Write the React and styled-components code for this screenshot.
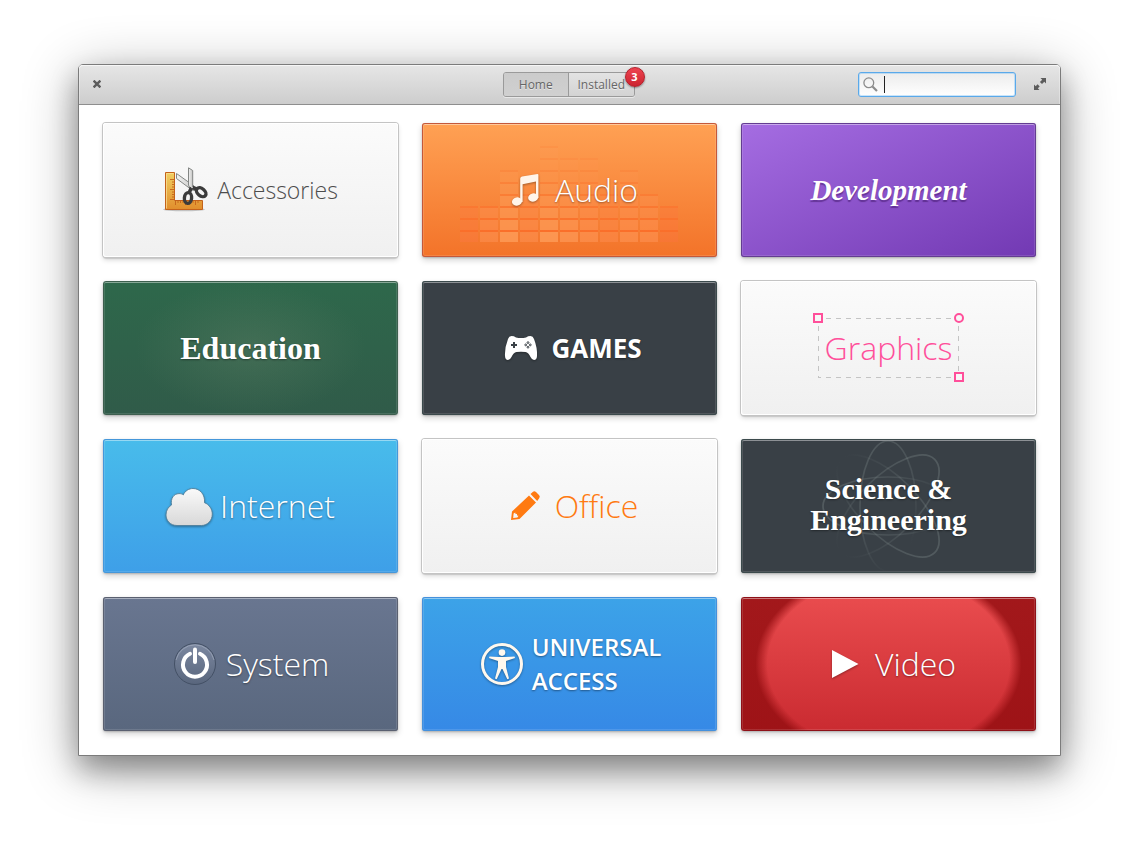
import React from "react";
import styled, { createGlobalStyle, css } from "styled-components";

const GlobalStyle = createGlobalStyle`
  * { box-sizing: border-box; }
  body {
    margin: 0;
    background: #fff;
    font-family: "Open Sans", "Noto Sans", sans-serif;
  }
  button, input { font: inherit; }
`;

const Desktop = styled.div`
  min-height: 100vh;
  padding: 64px 78px 92px;
  overflow: hidden;
`;

const Window = styled.main`
  background: #fff;
  border: 1px solid #7b7b7b;
  border-radius: 5px 5px 0 0;
  box-shadow: 0 14px 28px rgba(0, 0, 0, 0.32), 0 10px 56px rgba(0, 0, 0, 0.32);
`;

const HeaderBar = styled.header`
  display: grid;
  grid-template-columns: 1fr auto 1fr;
  align-items: center;
  height: 40px;
  padding: 0 12px 0 10px;
  border-bottom: 1px solid #8e8e8e;
  border-radius: 4px 4px 0 0;
  background: linear-gradient(#e6e6e6, #cdcdcd);
  box-shadow: inset 0 1px 0 #f6f6f6, inset 1px 0 0 rgba(255, 255, 255, 0.3), inset -1px 0 0 rgba(255, 255, 255, 0.3);
`;

const IconButton = styled.button`
  display: grid;
  place-items: center;
  width: 16px;
  height: 24px;
  padding: 0 0 2px;
  border: 0;
  background: none;
  color: #5c5c5c;
`;

const HeaderEnd = styled.div`
  display: flex;
  align-items: center;
  justify-content: flex-end;
  gap: 16px;
`;

const Switcher = styled.nav`
  position: relative;
  display: flex;
  width: 132px;
  height: 25px;
  border: 1px solid #9a9a9a;
  border-radius: 3px;
  box-shadow: 0 1px 0 rgba(255, 255, 255, 0.5);
`;

const SwitchButton = styled.button`
  flex: 1;
  padding: 0;
  border: 0;
  font-size: 12px;
  line-height: 22px;
  color: #666;
  text-shadow: 0 1px 0 rgba(255, 255, 255, 0.5);
  border-radius: 2px;
  background: linear-gradient(#e3e3e3, #d3d3d3);
  ${(p) =>
    p.$active &&
    css`
      background: linear-gradient(#cbcbcb, #d0d0d0);
      border-right: 1px solid #9a9a9a;
      border-radius: 2px 0 0 2px;
    `}
`;

const Badge = styled.span`
  position: absolute;
  top: -6px;
  right: -11px;
  width: 20px;
  height: 20px;
  border: 1px solid #b3202b;
  border-radius: 50%;
  background: linear-gradient(#ee4350, #cc2430);
  box-shadow: 0 1px 2px rgba(0, 0, 0, 0.4);
  color: #fff;
  font-size: 11px;
  font-weight: 700;
  line-height: 18px;
  text-align: center;
`;

const SearchBox = styled.label`
  display: flex;
  align-items: center;
  width: 158px;
  height: 25px;
  padding-left: 4px;
  border: 1px solid #5aa9ea;
  border-radius: 3px;
  background: linear-gradient(#ececec, #fff);
  box-shadow: inset 0 0 0 1px rgba(120, 190, 245, 0.4);
`;

const Caret = styled.span`
  width: 1px;
  height: 17px;
  margin-left: 6px;
  background: #222;
`;

const SearchInput = styled.input`
  flex: 1;
  min-width: 0;
  padding: 0;
  border: 0;
  outline: 0;
  background: none;
  font-size: 12px;
`;

const Categories = styled.div`
  display: grid;
  grid-template-columns: repeat(3, 1fr);
  grid-auto-rows: 134px;
  gap: 24px;
  padding: 18px 24px 24px;
`;

const looks = {
  light: css`
    background: linear-gradient(#fbfbfb, #f0f0f0);
    box-shadow: 0 0 0 1px #c4c4c4, 0 2px 1px rgba(0, 0, 0, 0.12), 0 3px 5px rgba(0, 0, 0, 0.16), inset 0 0 0 1px #fff;
  `,
  audio: css`
    --edge: #c4583a;
    background: linear-gradient(#ffa154, #f37329);
  `,
  development: css`
    --edge: #633c91;
    background: linear-gradient(to bottom right, #a56de2, #7239b3);
  `,
  education: css`
    --edge: #3d5f4e;
    background: radial-gradient(ellipse 115px 67px at center, rgba(99, 129, 103, 0.38), rgba(99, 129, 103, 0)),
      linear-gradient(#2e684b, #305b49);
  `,
  dark: css`
    --edge: #3b4a4c;
    background: #394046;
  `,
  internet: css`
    --edge: #4597da;
    background: linear-gradient(#48bceb, #3e9fe8);
  `,
  system: css`
    --edge: #5a6070;
    background: linear-gradient(#697690, #59677e);
  `,
  access: css`
    --edge: #4490dc;
    background: linear-gradient(#3ca3e8, #3689e6);
  `,
  video: css`
    --edge: #8e1118;
    background: radial-gradient(
        ellipse 133px 96px at center,
        rgba(150, 15, 18, 0) 91%,
        rgba(150, 15, 18, 0.85) 100%
      ),
      linear-gradient(#e94c4e, #ca2b31);
  `,
};

const Card = styled.button`
  position: relative;
  display: flex;
  align-items: center;
  justify-content: center;
  gap: 6px;
  padding: 0;
  border: 0;
  border-radius: 3px;
  color: #fff;
  box-shadow: inset 0 0 0 1px var(--edge), inset 0 2px 0 rgba(255, 255, 255, 0.35),
    inset 0 0 0 2px rgba(255, 255, 255, 0.12), 0 1px 2px rgba(0, 0, 0, 0.2), 0 3px 6px rgba(0, 0, 0, 0.18);
  ${(p) => looks[p.$look]}
`;

const Title = styled.span`
  position: relative;
  font-size: 32px;
  font-weight: 300;
  line-height: 44px;
  color: ${(p) => p.$color || "#fff"};
  text-align: left;
  ${(p) => !p.$color && "text-shadow: 0 1px 2px rgba(0, 0, 0, 0.4);"}
`;

const SmallTitle = styled(Title)`
  font-size: 23px;
  line-height: 34px;
`;

const CapsTitle = styled(SmallTitle)`
  font-size: 24px;
  font-weight: 600;
  text-transform: uppercase;
`;

const GamesTitle = styled(CapsTitle)`
  font-size: 26px;
  font-weight: 700;
`;

const SerifTitle = styled(Title)`
  font-family: "Liberation Serif", serif;
  font-weight: 700;
  text-align: center;
`;

const ScriptTitle = styled(SerifTitle)`
  font-size: 29px;
  font-style: italic;
  text-shadow: 0 2px 1px rgba(60, 20, 100, 0.5);
`;

const TwoLineTitle = styled(SerifTitle)`
  padding-bottom: 4px;
  font-size: 30px;
  line-height: 31px;
`;

const Backdrop = styled.svg`
  position: absolute;
  inset: 0;
  width: 100%;
  height: 100%;
`;

const Glyph = styled.svg`
  position: relative;
  flex: none;
  width: 48px;
  height: 48px;
  overflow: visible;
  ${(p) => p.$shadow && "filter: drop-shadow(0 1px 1px rgba(0, 0, 0, 0.35));"}
`;

const Selection = styled.span`
  position: relative;
  display: grid;
  place-items: center;
  width: 141px;
  height: 60px;
`;

const SelectionMarks = styled.svg`
  position: absolute;
  inset: 0;
  width: 100%;
  height: 100%;
  overflow: visible;
`;

const columns = [
  [3, 0.15],
  [3, 0.5],
  [6, 0.9],
  [4, 0.5],
  [8, 0.9],
  [7, 0.75],
  [7, 0.6],
  [4, 0.4],
  [6, 0.6],
  [4, 0.55],
  [3, 0.1],
];

function Equalizer() {
  return (
    <Backdrop viewBox="0 0 295 134" aria-hidden="true">
      {columns.map(([count, strength], c) =>
        Array.from({ length: count }, (_, r) => {
          const fade = Math.max(0.22, 1 - r / 7);
          const x = 38 + c * 20;
          const y = 109 - r * 12;
          return (
            <g key={`${c}-${r}`} opacity={fade}>
              <rect x={x} y={y} width="18" height="10" fill="#ff6a3c" opacity="0.3" />
              <rect x={x} y={y} width="18" height="10" fill="#ffac66" opacity={strength * 0.65} />
              <rect x={x} y={y - 2} width="18" height="2" fill="#ff6224" opacity="0.5" />
            </g>
          );
        })
      )}
    </Backdrop>
  );
}

function Atom() {
  return (
    <Backdrop viewBox="0 0 295 134" fill="none" strokeWidth="1.7" aria-hidden="true">
      <defs>
        <linearGradient id="orbit" x1="0" y1="0" x2="1" y2="0">
          <stop offset="0" stopColor="#828e8e" stopOpacity="0.34" />
          <stop offset="0.6" stopColor="#828e8e" stopOpacity="0.2" />
          <stop offset="1" stopColor="#828e8e" stopOpacity="0" />
        </linearGradient>
        <linearGradient id="orbitTall" x1="0" y1="0" x2="0.5" y2="1">
          <stop offset="0" stopColor="#828e8e" stopOpacity="0.34" />
          <stop offset="0.6" stopColor="#828e8e" stopOpacity="0.2" />
          <stop offset="1" stopColor="#828e8e" stopOpacity="0" />
        </linearGradient>
      </defs>
      <ellipse cx="147" cy="67" rx="28" ry="65" stroke="url(#orbitTall)" />
      <ellipse cx="147" cy="67" rx="65" ry="29" stroke="url(#orbit)" />
      <ellipse cx="147" cy="67" rx="66" ry="29" stroke="url(#orbit)" transform="rotate(225 147 67)" />
      <ellipse cx="147" cy="67" rx="66" ry="29" stroke="url(#orbit)" transform="rotate(135 147 67)" />
    </Backdrop>
  );
}

function ScissorsIcon() {
  return (
    <Glyph viewBox="0 0 48 48" aria-hidden="true">
      <defs>
        <linearGradient id="wood" x1="0" y1="0" x2="0" y2="1">
          <stop offset="0" stopColor="#f0cf62" />
          <stop offset="1" stopColor="#e18e2c" />
        </linearGradient>
        <linearGradient id="steel">
          <stop offset="0" stopColor="#f2f2f2" />
          <stop offset="1" stopColor="#c4c4c2" />
        </linearGradient>
      </defs>
      <ellipse cx="21" cy="43.5" rx="21" ry="1.8" fill="#000" opacity="0.2" />
      <g transform="translate(-1 -1)">
        <path d="M3.5 7.5H12.5V35.5H40.5V44.5H3.5Z" fill="url(#wood)" stroke="#c4621a" />
        <path d="M4.5 43.5V8.5H11.5" fill="none" stroke="#fbe29b" opacity="0.7" />
        <path
          d="M8 14.5H12M10 17H12M10 19.5H12M10 22H12M8 24.5H12M10 27H12M10 29.5H12M10 32H12M8 34.5H12M13.5 36V40M16 36V38M18.5 36V38M21 36V38M23.5 36V40M28.5 36V38M31 36V38M33.5 36V40M36 36V38"
          stroke="#c4621a"
          strokeWidth="0.9"
        />
        <path d="M14.5 8.5L32 21L33.5 25.5L30 25L14.5 13.5Z" fill="url(#steel)" stroke="#838684" />
        <path d="M26.5 2.8L30.7 5.5V22L28 23.5L26.5 20Z" fill="url(#steel)" stroke="#838684" />
        <path d="M30.5 22.5L36 24.5M29.5 22.5L27 28" stroke="#3b3b3b" strokeWidth="3.6" />
        <ellipse cx="26" cy="33" rx="3.6" ry="5.4" transform="rotate(6 26 33)" fill="none" stroke="#3b3b3b" strokeWidth="3.4" />
        <ellipse cx="39.2" cy="27.2" rx="5.4" ry="3.6" transform="rotate(40 39.2 27.2)" fill="none" stroke="#3b3b3b" strokeWidth="3.4" />
        <circle cx="30" cy="22.5" r="0.8" fill="#ddd" />
      </g>
    </Glyph>
  );
}

function MusicIcon() {
  return (
    <Glyph $shadow viewBox="-2 0 48 48" fill="#fff5ea" aria-hidden="true">
      <path d="M17.2 12.5Q17.4 11 19 10.6L34.5 8Q35.4 8 35.4 9V32H33V15.5L19.6 18.3V36H17.2Z" />
      <ellipse cx="14" cy="35.5" rx="5.1" ry="4.1" transform="rotate(-12 14 35.5)" />
      <ellipse cx="30.2" cy="31.5" rx="5.1" ry="4.1" transform="rotate(-12 30.2 31.5)" />
    </Glyph>
  );
}

function GamepadIcon() {
  return (
    <Glyph $shadow viewBox="0 0 48 48" aria-hidden="true">
      <path
        d="M14.5 12Q17 12 19 13.4Q24 14.6 29 13.4Q31 12 33.5 12Q36 12.2 37 15Q40.5 24 40 32Q39.8 36 37 36Q35 36 33.5 33Q31.5 28.3 28.5 28Q24 27.3 19.5 28Q16.5 28.3 14.5 33Q13 36 11 36Q8.2 36 8 32Q7.5 24 11 15Q12 12.2 14.5 12Z"
        fill="#fff"
      />
      <path d="M14 21H20M17 18V24" stroke="#394046" strokeWidth="2" />
      <g fill="none" stroke="#394046" strokeWidth="1">
        <circle cx="31" cy="18.6" r="0.9" />
        <circle cx="31" cy="23.2" r="0.9" />
        <circle cx="28.7" cy="20.9" r="0.9" />
        <circle cx="33.3" cy="20.9" r="0.9" />
      </g>
    </Glyph>
  );
}

function CloudIcon() {
  return (
    <Glyph $shadow viewBox="1 0 48 48" aria-hidden="true">
      <defs>
        <linearGradient id="cloud" x1="0" y1="0" x2="0" y2="1">
          <stop offset="0" stopColor="#fafafa" />
          <stop offset="1" stopColor="#d8d8d8" />
        </linearGradient>
      </defs>
      <path
        d="M12 43.5C5.5 43.5 1 38.7 1 33C1 28.5 3.2 25 6.5 23C5.5 16.5 8.5 11.8 14 11.6C15.8 11.5 17.2 12 18.3 12.9C20 8.8 24 6.5 28 6.5C35 6.5 40.3 12.7 39.5 20.7C44 22.3 47.3 27 47.3 32C47.3 38.5 42.5 43.5 36.5 43.5Z"
        fill="url(#cloud)"
        stroke="#4f7f9b"
        strokeWidth="0.9"
      />
    </Glyph>
  );
}

function PencilIcon() {
  return (
    <Glyph viewBox="-1 0 48 48" fill="#ff7a11" aria-hidden="true">
      <path d="M9 38L10 29.5L27 13.5L34 20.5L17.5 37ZM11.6 31.5L11.2 36L15.4 35.4L16.5 33.8L15 33.6V32L13.3 31.8V30.5Z" fillRule="evenodd" />
      <path d="M28.5 12L31 9.7Q32.5 8.6 34 10L37 13Q38.5 14.6 37.2 16.2L35.2 19Z" />
    </Glyph>
  );
}

function PowerIcon() {
  return (
    <Glyph viewBox="-1 0 48 48" fill="none" aria-hidden="true">
      <defs>
        <linearGradient id="knob" x1="0" y1="0" x2="0" y2="1">
          <stop offset="0" stopColor="#7c88a0" />
          <stop offset="1" stopColor="#59667d" />
        </linearGradient>
      </defs>
      <circle cx="22" cy="24" r="20.5" fill="url(#knob)" stroke="#435065" />
      <path d="M3 20A19.5 19.5 0 0 1 41 20" stroke="#a3adbf" opacity="0.7" />
      <g stroke="#fff" strokeLinecap="round">
        <path d="M17 13.8A12 12 0 1 0 27 13.8" strokeWidth="4" />
        <path d="M22 9.5V22" strokeWidth="4" />
      </g>
    </Glyph>
  );
}

function AccessIcon() {
  return (
    <Glyph $shadow viewBox="0 0 48 48" aria-hidden="true">
      <circle cx="24" cy="24" r="19.5" fill="none" stroke="#fff8ee" strokeWidth="3" />
      <circle cx="24" cy="12.6" r="3.3" fill="#fff8ee" />
      <path
        d="M11.5 16.5L20.5 17H27.5L36.5 16.5L37 18L28 21V27L31 38.5L29.3 39.2L24.5 29H23.5L18.7 39.2L17 38.5L20 27V21L11 18Z"
        fill="#fff8ee"
      />
    </Glyph>
  );
}

function PlayIcon() {
  return (
    <Glyph $shadow viewBox="-2 0 48 48" aria-hidden="true">
      <path d="M9 10L35.5 24L9 38Z" fill="#fff" />
    </Glyph>
  );
}

export default function App() {
  return (
    <Desktop>
      <GlobalStyle />
      <Window>
        <HeaderBar>
          <IconButton aria-label="Close">
            <svg width="8" height="8" viewBox="0 0 8 8" stroke="currentColor" strokeWidth="2.4">
              <path d="M0.6 0.6L7.4 7.4M7.4 0.6L0.6 7.4" />
            </svg>
          </IconButton>
          <Switcher>
            <SwitchButton $active>Home</SwitchButton>
            <SwitchButton>Installed</SwitchButton>
            <Badge>3</Badge>
          </Switcher>
          <HeaderEnd>
            <SearchBox>
              <svg width="15" height="15" viewBox="0 0 15 15" fill="none" stroke="#8c8c8c" aria-hidden="true">
                <circle cx="5.8" cy="5.8" r="4.9" strokeWidth="1.3" />
                <path d="M9.5 9.5L14 14" strokeWidth="2.2" />
              </svg>
              <Caret />
              <SearchInput type="text" aria-label="Search" />
            </SearchBox>
            <IconButton aria-label="Maximize">
              <svg width="12" height="12" viewBox="0 0 12 12" fill="currentColor">
                <path d="M6.5 0H12V5.5L10.3 3.8L8 6.1L5.9 4L8.2 1.7Z" />
                <path d="M5.5 12H0V6.5L1.7 8.2L3.6 6.3L5.7 8.4L3.8 10.3Z" />
              </svg>
            </IconButton>
          </HeaderEnd>
        </HeaderBar>
        <Categories>
          <Card $look="light">
            <ScissorsIcon />
            <SmallTitle $color="#4d4d4d">Accessories</SmallTitle>
          </Card>
          <Card $look="audio">
            <Equalizer />
            <MusicIcon />
            <Title>Audio</Title>
          </Card>
          <Card $look="development">
            <ScriptTitle>Development</ScriptTitle>
          </Card>
          <Card $look="education">
            <SerifTitle>Education</SerifTitle>
          </Card>
          <Card $look="dark">
            <GamepadIcon />
            <GamesTitle>Games</GamesTitle>
          </Card>
          <Card $look="light">
            <Selection>
              <SelectionMarks viewBox="0 0 141 60" fill="none" aria-hidden="true">
                <g stroke="#c4c4c4" strokeDasharray="5 5" strokeDashoffset="2">
                  <path d="M0 0.5H141" />
                  <path d="M0 59.5H141" />
                  <path d="M0.5 0V60" />
                  <path d="M140.5 0V60" />
                </g>
                <g fill="#f7f7f7" stroke="#ff4f9a" strokeWidth="2">
                  <rect x="-4" y="-4" width="8" height="8" />
                  <rect x="137" y="55" width="8" height="8" />
                  <circle cx="141" cy="0" r="4" />
                </g>
              </SelectionMarks>
              <Title $color="#ff4f9a">Graphics</Title>
            </Selection>
          </Card>
          <Card $look="internet">
            <CloudIcon />
            <Title>Internet</Title>
          </Card>
          <Card $look="light">
            <PencilIcon />
            <Title $color="#ff7a11">Office</Title>
          </Card>
          <Card $look="dark">
            <Atom />
            <TwoLineTitle>
              Science &amp;
              <br />
              Engineering
            </TwoLineTitle>
          </Card>
          <Card $look="system">
            <PowerIcon />
            <Title>System</Title>
          </Card>
          <Card $look="access">
            <AccessIcon />
            <CapsTitle>
              Universal
              <br />
              Access
            </CapsTitle>
          </Card>
          <Card $look="video">
            <PlayIcon />
            <Title>Video</Title>
          </Card>
        </Categories>
      </Window>
    </Desktop>
  );
}
